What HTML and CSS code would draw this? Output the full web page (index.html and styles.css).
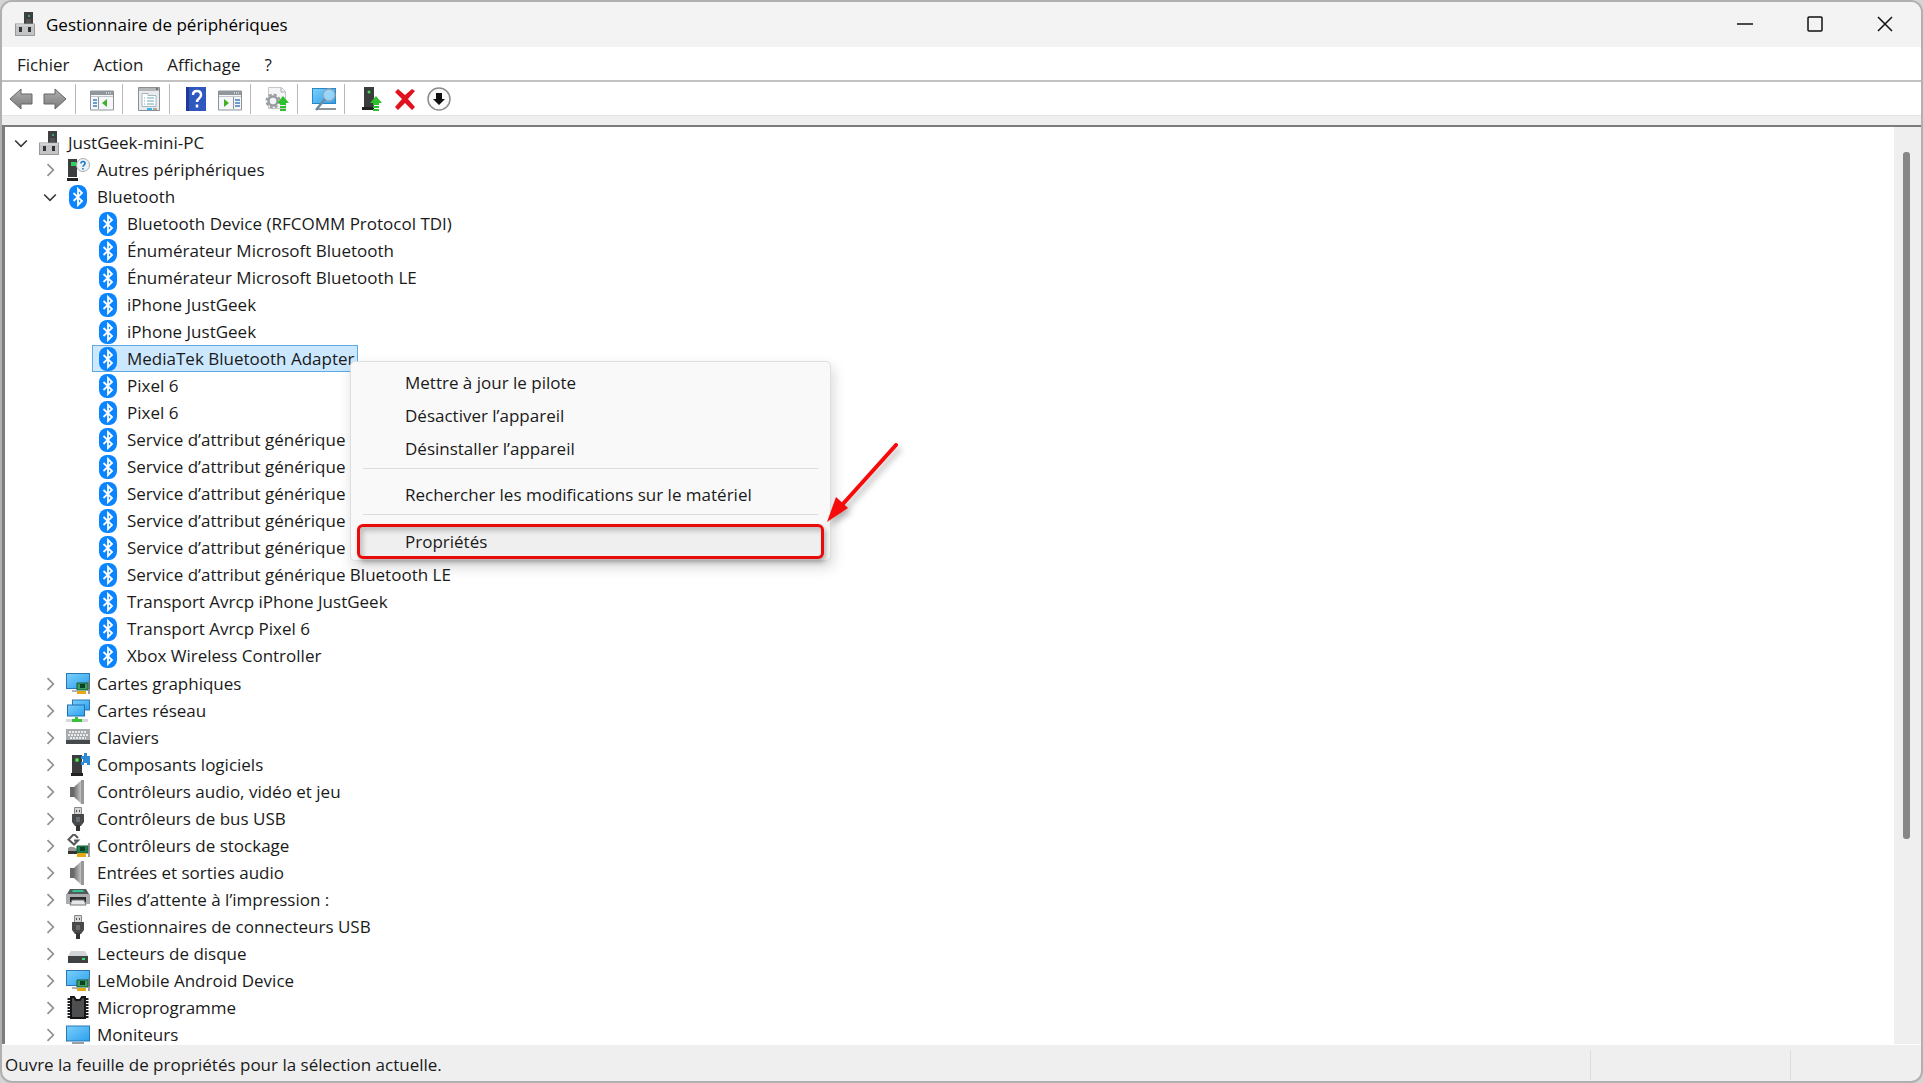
FILE: index.html
```html
<!DOCTYPE html>
<html lang="fr">
<head>
<meta charset="utf-8">
<title>Gestionnaire de périphériques</title>
<link rel="stylesheet" href="styles.css">
</head>
<body>
<svg class="sprite" aria-hidden="true">
  <defs>
    <linearGradient id="screen" x1="0" y1="0" x2="1" y2="1"><stop offset="0" stop-color="#7cd0fb"/><stop offset="1" stop-color="#2b9fee"/></linearGradient>
    <linearGradient id="metal" x1="0" y1="0" x2="1" y2="0"><stop offset="0" stop-color="#707070"/><stop offset="1" stop-color="#c4c4c4"/></linearGradient>
    <linearGradient id="arrowfill" x1="0" y1="0" x2="0" y2="1"><stop offset="0" stop-color="#b0b0b0"/><stop offset="1" stop-color="#7a7a7a"/></linearGradient>
  </defs>
  <symbol id="i-computer" viewBox="0 0 24 24"><rect x="11" y="0" width="9" height="13" fill="#3d3f40"/><path d="M13 10h5M13 8h5" stroke="#666"/><circle cx="16" cy="4" r="1" fill="#3fc48a"/><rect x="2.500" y="12" width="19" height="11.500" fill="#c2c4c6" stroke="#98999b"/><path d="M3 13h18" stroke="#e6e6e6"/><path d="M6 15h3v5h-3zM15 15h3v5h-3z" fill="#333"/></symbol>
  <symbol id="i-bt" viewBox="0 0 24 24"><rect x="3" y="0" width="18" height="24" rx="8" fill="#0a84ff"/><path d="M7.500 8l8.500 8-4 4V4l4 4-8.500 8" fill="none" stroke="#fff" stroke-width="1.800"/></symbol>
  <symbol id="i-unknown" viewBox="0 0 24 24"><path d="M2 1h9v18H2z" fill="#3a3c3e"/><path d="M1 20h11v3H1z" fill="#222"/><path d="M5 4h5v4H5z" fill="#2bd35a"/><circle cx="17" cy="7" r="6.500" fill="#eef2f5" stroke="#a9adb0"/><path d="M15 5.500q0-2 2-2t2 2q0 1-1 1.600-1 .6-1 1.600M17 10v1.400" fill="none" stroke="#1976c8" stroke-width="1.600"/></symbol>
  <symbol id="i-display" viewBox="0 0 24 24"><rect x=".5" y="1.500" width="23" height="15" fill="url(#screen)" stroke="#2b78b5"/><path d="M6 18h5v2H6z" fill="#aeb4b8"/><path d="M11 11h11v7H11z" fill="#3f9c5c" stroke="#155c3a"/><path d="M14 12h5v4h-5z" fill="#0e4028"/><path d="M11 19h9v3h-9z" fill="#e6a817"/><path d="M23 9v13" stroke="#777" stroke-width="1.500"/></symbol>
  <symbol id="i-network" viewBox="0 0 24 24"><rect x="6.500" y="1" width="17" height="10" fill="url(#screen)" stroke="#2b78b5"/><rect x="1.500" y="6" width="17" height="11" fill="url(#screen)" stroke="#1f6fae"/><path d="M0 20h22v3H0z" fill="#d4d8d8"/><path d="M9 18h3v2h4v3H6v-3h3z" fill="#3cbf3c"/></symbol>
  <symbol id="i-keyboard" viewBox="0 0 24 24"><path d="M0 3h24v12H0z" fill="#a7abae"/><path d="M0 14h24v4H0z" fill="#45494c"/><path d="M3 6h18M2 9h20M4 12h16" stroke="#fff" stroke-width="1.600" stroke-dasharray="2 1"/></symbol>
  <symbol id="i-software" viewBox="0 0 24 24"><path d="M6 2h10v18H6z" fill="#3a3c3e"/><path d="M5 20h12v3H5z" fill="#222"/><circle cx="11" cy="7" r="2" fill="#3ee04c"/><path d="M15 3h3V0h3v3h3v9h-3v-2h-3v2h-3V9h2V6h-2z" fill="#2e8bd6"/></symbol>
  <symbol id="i-speaker" viewBox="0 0 24 24"><path d="M4 7h4v10H4z" fill="#65696c"/><path d="M8 7l7-6.500v23L8 17z" fill="url(#metal)"/><path d="M15 0h3v24h-3z" fill="#96999c"/></symbol>
  <symbol id="i-usb" viewBox="0 0 24 24"><path d="M8.500.5h7v7h-7z" fill="#d4d4d4" stroke="#888"/><path d="M10 3h1v2h-1zM13 3h1v2h-1z" fill="#555"/><path d="M6 7h12v8l-3 4H9l-3-4z" fill="#47494b"/><path d="M10 10h4v5h-4z" fill="#6b6e70"/><path d="M10 18h4v6h-4z" fill="#333"/></symbol>
  <symbol id="i-storage" viewBox="0 0 24 24"><path d="M12 4L8 0 2.500 5.500l5.500 5 4-4H8" fill="none" stroke="#55585a" stroke-width="2"/><path d="M2 14q4-3 9 1v4H2z" fill="#999"/><path d="M2 17h9v3H2z" fill="#333"/><path d="M11 12h11v7H11z" fill="#1e8050" stroke="#155c3a"/><path d="M14 13h5v4h-5z" fill="#0e4028"/><path d="M11 19h9v4h-9z" fill="#e6a817"/><path d="M23 9v14" stroke="#777" stroke-width="1.500"/></symbol>
  <symbol id="i-printer" viewBox="0 0 24 24"><path d="M4 1h16l3 5H1z" fill="#55595b"/><path d="M7 2h10l1 2H6z" fill="#31c48c"/><path d="M0 6h24v10H0z" fill="#a9adaf"/><path d="M4 9h16v5H4z" fill="#292b2d"/><path d="M6 12h12l2 5H4z" fill="#e5e7e8" stroke="#777"/></symbol>
  <symbol id="i-disk" viewBox="0 0 24 24"><path d="M5 9h14l3 5H2z" fill="#d3d5d6"/><path d="M2 14h20v7H2z" fill="#3f4244"/><path d="M16 17h3" stroke="#35e05a" stroke-width="2"/></symbol>
  <symbol id="i-chip" viewBox="0 0 24 24"><path d="M3 2v20M21 2v20" stroke="#222" stroke-width="3" stroke-dasharray="2 1"/><path d="M5 1h3l2 3h4l2-3h3v21H5z" fill="#4c4e50" stroke="#161616" stroke-width="2"/></symbol>
  <symbol id="i-monitor" viewBox="0 0 24 24"><rect x=".5" y="3" width="23" height="15" fill="url(#screen)" stroke="#2b78b5"/><path d="M6 19h12v2H6z" fill="#9aa0a4"/></symbol>

  <symbol id="t-back" viewBox="0 0 24 24"><path d="M1 12L12 2v5h11v10H12v5z" fill="url(#arrowfill)" stroke="#666"/></symbol>
  <symbol id="t-forward" viewBox="0 0 24 24"><path d="M23 12L12 2v5H1v10h11v5z" fill="url(#arrowfill)" stroke="#666"/></symbol>
  <symbol id="t-tree" viewBox="0 0 24 24"><path d="M.5 4h23v19H.5z" fill="#f6f7f8" stroke="#8d9499"/><path d="M1 4h22v4H1z" fill="#8f979d"/><path d="M16 6h6" stroke="#fff" stroke-dasharray="1 1"/><path d="M1 9.500h22" stroke="#c0c5c9"/><path d="M8.500 10v12" stroke="#8d9499"/><path d="M3 13h4M3 16h4M3 19h4" stroke="#3f7fc0" stroke-width="1.500"/><path d="M17 12v8l-5-4z" fill="#43b02a"/></symbol>
  <symbol id="t-props" viewBox="0 0 24 24"><path d="M1.500.5h21v23h-21z" fill="#e9ebec" stroke="#8c8f91"/><path d="M2 1h20v3H2z" fill="#b3b7ba"/><path d="M19 2h2" stroke="#333"/><path d="M5 6.500h6v2h8v11H5z" fill="#fff" stroke="#a4b6c2"/><path d="M7 11h1M10 11h7M7 14h1M10 14h7M7 17h1M10 17h7" stroke="#6fa8b8"/><path d="M10 21h5v2h-5z" fill="#37b3f0"/><path d="M16 21h4v2h-4z" fill="#aaa"/></symbol>
  <symbol id="t-help" viewBox="0 0 24 24"><path d="M2 0h20v24H2z" fill="#2f57c0"/><path d="M2 0h3v24H2z" fill="#1e3a96"/><path d="M9 8q0-4 4-4t4 4q0 2-2 3.500t-2 3.500M13 17.500v3" fill="none" stroke="#fff" stroke-width="2.500"/></symbol>
  <symbol id="t-action" viewBox="0 0 24 24"><path d="M.5 4h23v19H.5z" fill="#f6f7f8" stroke="#8d9499"/><path d="M1 4h22v4H1z" fill="#8f979d"/><path d="M16 6h6" stroke="#fff" stroke-dasharray="1 1"/><path d="M1 9.500h22" stroke="#c0c5c9"/><path d="M15.500 10v12" stroke="#8d9499"/><path d="M17 13h5M17 16h5M17 19h5" stroke="#3f7fc0" stroke-width="1.500"/><path d="M6 12v8l5-4z" fill="#43b02a"/></symbol>
  <symbol id="t-update" viewBox="0 0 24 24"><path d="M3.500.5h13l4 4v17h-17z" fill="#f4f5f6" stroke="#c4c6c8"/><path d="M16 1v4h4" fill="none" stroke="#aaa"/><circle cx="8" cy="14" r="4.500" fill="none" stroke="#9a9da0" stroke-width="2.500"/><circle cx="8" cy="14" r="6.500" fill="none" stroke="#9a9da0" stroke-width="2" stroke-dasharray="3 2.100"/><path d="M18 9l6 7h-3v2h-6v-2h-3zM15 19h6v2h-6zM15 22h6v2h-6z" fill="#2fbf2f"/></symbol>
  <symbol id="t-scan" viewBox="0 0 24 24"><rect x=".5" y="1.500" width="23" height="15" fill="url(#screen)" stroke="#2b86c5"/><path d="M5 21h19v2H5z" fill="#8f969b"/><circle cx="17" cy="8" r="6" fill="#b8e3fb" fill-opacity=".7" stroke="#8aa8bb" stroke-width="1.500"/><path d="M13 12L4 23" stroke="#6b8ba0" stroke-width="2.500"/></symbol>
  <symbol id="t-add" viewBox="0 0 24 24"><path d="M5 0h10v20H5z" fill="#3a3c3e"/><path d="M3 20h12v3H3z" fill="#222"/><circle cx="10" cy="5" r="1.500" fill="#3ee04c"/><path d="M17 9l6 7h-3v2h-6v-2h-3zM14 19h6v2h-6zM14 22h6v2h-6z" fill="#2fbf2f"/></symbol>
  <symbol id="t-remove" viewBox="0 0 24 24"><path d="M2 5l3-3 7 6 7-6 3 2-7 8 7 8-3 3-7-7-7 7-3-3 7-8z" fill="#e0121f"/></symbol>
  <symbol id="t-disable" viewBox="0 0 24 24"><circle cx="12" cy="12" r="11" fill="#fcfcfc" stroke="#8c8c8c" stroke-width="1.500"/><path d="M9 6h6v6h3l-6 6-6-6h3z" fill="#111"/></symbol>

  <symbol id="c-open" viewBox="0 0 24 24"><path d="M5 9l7 7 7-7" fill="none" stroke="#3b3b3b" stroke-width="2"/></symbol>
  <symbol id="c-closed" viewBox="0 0 24 24"><path d="M9 5l7 7-7 7" fill="none" stroke="#909090" stroke-width="2"/></symbol>
</svg>

<div class="window">
  <header class="titlebar">
    <svg class="icon"><use href="#i-computer"/></svg>
    <h1 class="title">Gestionnaire de périphériques</h1>
    <div class="captions">
      <button class="caption" aria-label="Réduire"><svg class="glyph" viewBox="0 0 16 16"><path d="M0 8h16"/></svg></button>
      <button class="caption" aria-label="Agrandir"><svg class="glyph" viewBox="0 0 16 16"><rect x="1" y="1" width="14" height="14" rx="1"/></svg></button>
      <button class="caption" aria-label="Fermer"><svg class="glyph" viewBox="0 0 16 16"><path d="M1 1l14 14M15 1L1 15"/></svg></button>
    </div>
  </header>

  <nav class="menubar">
    <button class="menu-title">Fichier</button>
    <button class="menu-title">Action</button>
    <button class="menu-title">Affichage</button>
    <button class="menu-title">?</button>
  </nav>

  <div class="toolbar" role="toolbar" aria-label="Outils">
    <button class="tool" aria-label="Précédent"><svg class="icon"><use href="#t-back"/></svg></button>
    <button class="tool" aria-label="Suivant"><svg class="icon"><use href="#t-forward"/></svg></button>
    <span class="divider"></span>
    <button class="tool" aria-label="Afficher l’arborescence"><svg class="icon"><use href="#t-tree"/></svg></button>
    <span class="divider"></span>
    <button class="tool" aria-label="Propriétés"><svg class="icon"><use href="#t-props"/></svg></button>
    <span class="divider"></span>
    <button class="tool" aria-label="Aide"><svg class="icon"><use href="#t-help"/></svg></button>
    <button class="tool" aria-label="Volet Actions"><svg class="icon"><use href="#t-action"/></svg></button>
    <span class="divider"></span>
    <button class="tool" aria-label="Mettre à jour le pilote"><svg class="icon"><use href="#t-update"/></svg></button>
    <span class="divider"></span>
    <button class="tool" aria-label="Rechercher les modifications"><svg class="icon"><use href="#t-scan"/></svg></button>
    <span class="divider"></span>
    <button class="tool" aria-label="Ajouter des pilotes"><svg class="icon"><use href="#t-add"/></svg></button>
    <button class="tool" aria-label="Désinstaller l’appareil"><svg class="icon"><use href="#t-remove"/></svg></button>
    <button class="tool" aria-label="Désactiver l’appareil"><svg class="icon"><use href="#t-disable"/></svg></button>
  </div>

  <main class="pane">
    <ul class="tree">
      <li>
        <div class="row"><button class="toggle" aria-label="Réduire"><svg class="chevron"><use href="#c-open"/></svg></button><span class="node"><svg class="icon"><use href="#i-computer"/></svg>JustGeek-mini-PC</span></div>
        <ul class="branch">
          <li class="row"><button class="toggle" aria-label="Développer"><svg class="chevron"><use href="#c-closed"/></svg></button><span class="node"><svg class="icon"><use href="#i-unknown"/></svg>Autres périphériques</span></li>
          <li>
            <div class="row"><button class="toggle" aria-label="Réduire"><svg class="chevron"><use href="#c-open"/></svg></button><span class="node"><svg class="icon"><use href="#i-bt"/></svg>Bluetooth</span></div>
            <ul class="branch leaves">
              <li class="row"><span class="node"><svg class="icon"><use href="#i-bt"/></svg>Bluetooth Device (RFCOMM Protocol TDI)</span></li>
              <li class="row"><span class="node"><svg class="icon"><use href="#i-bt"/></svg>Énumérateur Microsoft Bluetooth</span></li>
              <li class="row"><span class="node"><svg class="icon"><use href="#i-bt"/></svg>Énumérateur Microsoft Bluetooth LE</span></li>
              <li class="row"><span class="node"><svg class="icon"><use href="#i-bt"/></svg>iPhone JustGeek</span></li>
              <li class="row"><span class="node"><svg class="icon"><use href="#i-bt"/></svg>iPhone JustGeek</span></li>
              <li class="row anchor"><span class="node selected"><svg class="icon"><use href="#i-bt"/></svg>MediaTek Bluetooth Adapter</span>
                <div class="context" role="menu">
                  <button class="command" role="menuitem">Mettre à jour le pilote</button>
                  <button class="command" role="menuitem">Désactiver l’appareil</button>
                  <button class="command" role="menuitem">Désinstaller l’appareil</button>
                  <hr class="rule">
                  <button class="command" role="menuitem">Rechercher les modifications sur le matériel</button>
                  <hr class="rule">
                  <button class="command current" role="menuitem">Propriétés</button>
                  <svg class="pointer" viewBox="0 0 80 90"><path d="M74 8L20 68" stroke="#f60a0a" stroke-width="4" stroke-linecap="round"/><path d="M5 85l9-25 12 11z" fill="#f60a0a"/></svg>
                </div>
              </li>
              <li class="row"><span class="node"><svg class="icon"><use href="#i-bt"/></svg>Pixel 6</span></li>
              <li class="row"><span class="node"><svg class="icon"><use href="#i-bt"/></svg>Pixel 6</span></li>
              <li class="row"><span class="node"><svg class="icon"><use href="#i-bt"/></svg>Service d’attribut générique Bluetooth LE</span></li>
              <li class="row"><span class="node"><svg class="icon"><use href="#i-bt"/></svg>Service d’attribut générique Bluetooth LE</span></li>
              <li class="row"><span class="node"><svg class="icon"><use href="#i-bt"/></svg>Service d’attribut générique Bluetooth LE</span></li>
              <li class="row"><span class="node"><svg class="icon"><use href="#i-bt"/></svg>Service d’attribut générique Bluetooth LE</span></li>
              <li class="row"><span class="node"><svg class="icon"><use href="#i-bt"/></svg>Service d’attribut générique Bluetooth LE</span></li>
              <li class="row"><span class="node"><svg class="icon"><use href="#i-bt"/></svg>Service d’attribut générique Bluetooth LE</span></li>
              <li class="row"><span class="node"><svg class="icon"><use href="#i-bt"/></svg>Transport Avrcp iPhone JustGeek</span></li>
              <li class="row"><span class="node"><svg class="icon"><use href="#i-bt"/></svg>Transport Avrcp Pixel 6</span></li>
              <li class="row"><span class="node"><svg class="icon"><use href="#i-bt"/></svg>Xbox Wireless Controller</span></li>
            </ul>
          </li>
          <li class="row"><button class="toggle" aria-label="Développer"><svg class="chevron"><use href="#c-closed"/></svg></button><span class="node"><svg class="icon"><use href="#i-display"/></svg>Cartes graphiques</span></li>
          <li class="row"><button class="toggle" aria-label="Développer"><svg class="chevron"><use href="#c-closed"/></svg></button><span class="node"><svg class="icon"><use href="#i-network"/></svg>Cartes réseau</span></li>
          <li class="row"><button class="toggle" aria-label="Développer"><svg class="chevron"><use href="#c-closed"/></svg></button><span class="node"><svg class="icon"><use href="#i-keyboard"/></svg>Claviers</span></li>
          <li class="row"><button class="toggle" aria-label="Développer"><svg class="chevron"><use href="#c-closed"/></svg></button><span class="node"><svg class="icon"><use href="#i-software"/></svg>Composants logiciels</span></li>
          <li class="row"><button class="toggle" aria-label="Développer"><svg class="chevron"><use href="#c-closed"/></svg></button><span class="node"><svg class="icon"><use href="#i-speaker"/></svg>Contrôleurs audio, vidéo et jeu</span></li>
          <li class="row"><button class="toggle" aria-label="Développer"><svg class="chevron"><use href="#c-closed"/></svg></button><span class="node"><svg class="icon"><use href="#i-usb"/></svg>Contrôleurs de bus USB</span></li>
          <li class="row"><button class="toggle" aria-label="Développer"><svg class="chevron"><use href="#c-closed"/></svg></button><span class="node"><svg class="icon"><use href="#i-storage"/></svg>Contrôleurs de stockage</span></li>
          <li class="row"><button class="toggle" aria-label="Développer"><svg class="chevron"><use href="#c-closed"/></svg></button><span class="node"><svg class="icon"><use href="#i-speaker"/></svg>Entrées et sorties audio</span></li>
          <li class="row"><button class="toggle" aria-label="Développer"><svg class="chevron"><use href="#c-closed"/></svg></button><span class="node"><svg class="icon"><use href="#i-printer"/></svg>Files d’attente à l’impression :</span></li>
          <li class="row"><button class="toggle" aria-label="Développer"><svg class="chevron"><use href="#c-closed"/></svg></button><span class="node"><svg class="icon"><use href="#i-usb"/></svg>Gestionnaires de connecteurs USB</span></li>
          <li class="row"><button class="toggle" aria-label="Développer"><svg class="chevron"><use href="#c-closed"/></svg></button><span class="node"><svg class="icon"><use href="#i-disk"/></svg>Lecteurs de disque</span></li>
          <li class="row"><button class="toggle" aria-label="Développer"><svg class="chevron"><use href="#c-closed"/></svg></button><span class="node"><svg class="icon"><use href="#i-display"/></svg>LeMobile Android Device</span></li>
          <li class="row"><button class="toggle" aria-label="Développer"><svg class="chevron"><use href="#c-closed"/></svg></button><span class="node"><svg class="icon"><use href="#i-chip"/></svg>Microprogramme</span></li>
          <li class="row"><button class="toggle" aria-label="Développer"><svg class="chevron"><use href="#c-closed"/></svg></button><span class="node"><svg class="icon"><use href="#i-monitor"/></svg>Moniteurs</span></li>
        </ul>
      </li>
    </ul>
    <div class="track"><div class="thumb"></div></div>
  </main>

  <footer class="status">
    <span class="message">Ouvre la feuille de propriétés pour la sélection actuelle.</span>
    <span class="cell"></span>
    <span class="cell last"></span>
  </footer>
</div>
</body>
</html>
```
FILE: styles.css
```css
* { box-sizing: border-box; }
body { margin: 0; background: #d4d4d4; color: #1a1a1a; font: 17px/27px "Open Sans", "Noto Sans", sans-serif; }
button { border: 0; padding: 0; background: none; color: inherit; font: inherit; text-align: left; }
ul { margin: 0; padding: 0; list-style: none; }
.sprite { position: absolute; width: 0; height: 0; }
.icon { display: block; flex: none; width: 24px; height: 24px; }

.window { display: flex; flex-direction: column; height: 100vh; border: 2px solid #b0b0b0; border-radius: 12px; background: #efefef; overflow: hidden; }

.titlebar { display: flex; align-items: center; gap: 9px; height: 45px; padding: 0 1px 1px 11px; background: #f3f3f3; }
.title { flex: 1; margin: 0; color: #000; font-size: 17px; font-weight: 400; }
.captions { display: flex; }
.caption { display: grid; place-items: center; width: 70px; height: 44px; }
.glyph { width: 16px; height: 16px; fill: none; stroke: #111; stroke-width: 1.5; }

.menubar { display: flex; gap: 24px; height: 35px; padding: 4px 15px; background: #fff; border-bottom: 2px solid #c2c2c2; }

.toolbar { display: flex; align-items: center; height: 34px; padding: 0 2px; background: #fff; border-bottom: 1px solid #e4e4e4; }
.tool { padding: 0 5px; }
.divider { width: 1px; height: 30px; margin: 0 9px 0 3px; background: #b8b8b8; }

.pane { display: flex; flex: 1; min-height: 0; margin-top: 9px; border: solid #7c7c7c; border-width: 2px 0 0 3px; background: #fff; overflow: hidden; }
.tree { flex: 1; padding: 2px 0 0 4px; }
.branch { padding-left: 29px; }
.leaves { padding: 0 0 1px 54px; }
.row { display: flex; align-items: center; height: 27px; }
.toggle { display: grid; place-items: center; width: 24px; height: 24px; }
.chevron { display: block; width: 20px; height: 20px; }
.node { display: flex; align-items: center; gap: 7px; height: 27px; padding: 0 3px; border: 1px solid transparent; white-space: nowrap; }
.selected { border-color: #5fa9e4; background: #cce8ff; }

.anchor { position: relative; }
.context { position: absolute; z-index: 1; top: 16px; left: 258px; width: 481px; padding: 4px 6px 1px; border: 1px solid #dedede; border-radius: 5px; background: #f9f9f9; box-shadow: 2px 6px 14px rgba(0, 0, 0, .16); }
.command { display: block; width: 100%; height: 33px; padding-left: 48px; }
.rule { height: 1px; margin: 3px 6px 9px; border: 0; background: #dcdcdc; }
.current { height: 35px; padding-left: 45px; border: 3px solid #ea0a0a; border-radius: 6px; background: #efefef; line-height: 29px; box-shadow: 2px 3px 5px rgba(0, 0, 0, .3), inset 3px 4px 5px rgba(0, 0, 0, .2); }
.pointer { position: absolute; top: 75px; left: 471px; width: 80px; height: 90px; filter: drop-shadow(3px 4px 3px rgba(0, 0, 0, .3)); }

.track { flex: none; width: 27px; padding: 25px 0 0 9px; background: #efefef; }
.thumb { width: 7px; height: 77%; border-radius: 3px; background: #878787; }

.status { display: flex; align-items: center; height: 37px; padding: 3px 0 0 3px; border-top: 1px solid #fff; }
.message { flex: 1; }
.cell { width: 200px; height: 30px; border-left: 1px solid #dcdcdc; }
.last { width: 131px; }
```
